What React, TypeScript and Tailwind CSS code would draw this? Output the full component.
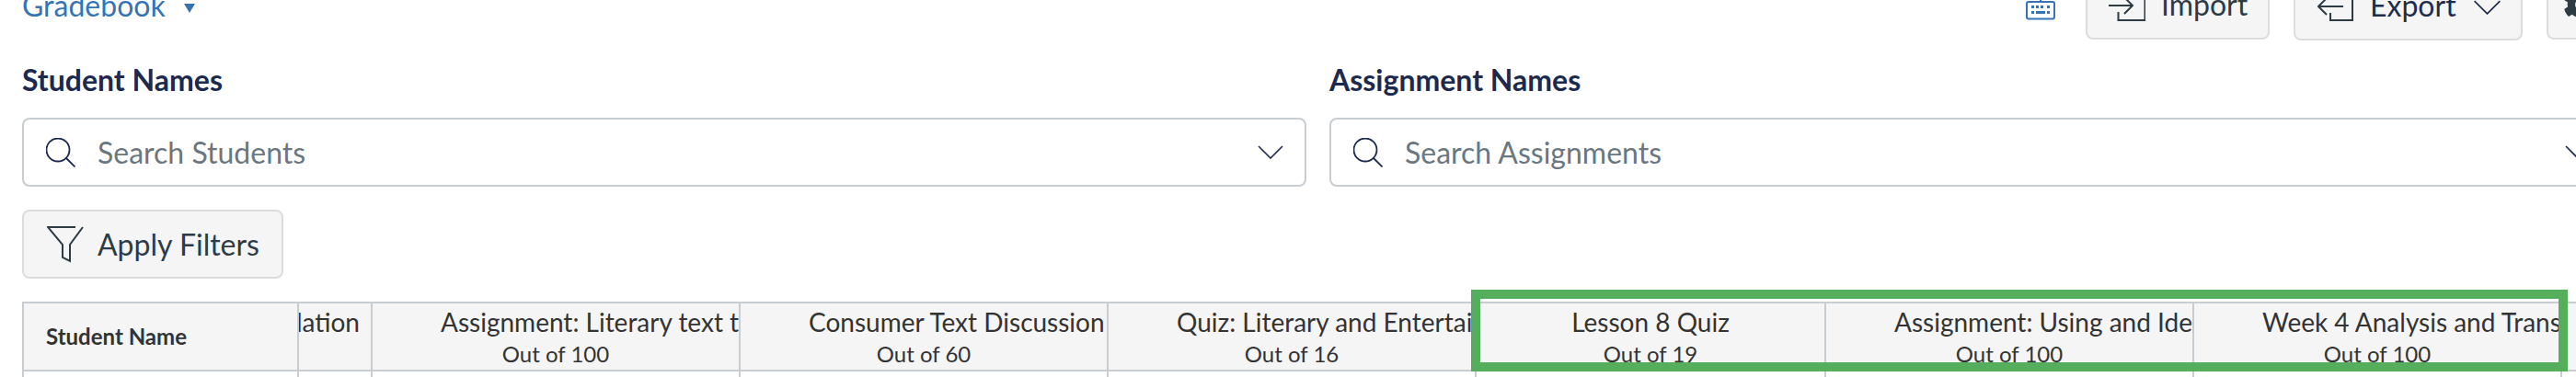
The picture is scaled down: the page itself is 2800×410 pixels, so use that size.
import { FaCog } from 'react-icons/fa';

const font = { fontFamily: 'Lato, sans-serif' };

function SearchIcon() {
  return (
    <svg viewBox="0 0 32 32" className="h-[32px] w-[32px] shrink-0 text-[#1b2a4e]" fill="none" stroke="currentColor" strokeWidth="1.8">
      <circle cx="13" cy="13" r="12.5" />
      <path d="M21.5 21.5 31.5 31.5" />
    </svg>
  );
}

function Chevron({ className }: { className: string }) {
  return (
    <svg viewBox="0 0 28 15" className={`shrink-0 ${className}`} fill="none" stroke="currentColor" strokeWidth="1.6">
      <path d="M1 1l13 13L27 1" />
    </svg>
  );
}

function SearchBox({ placeholder }: { placeholder: string }) {
  return (
    <div className="flex h-[75px] w-[1396px] items-center rounded-[8px] border-2 border-[#c7cdd1] pl-[24px]">
      <SearchIcon />
      <span className="ml-[24px] flex-1 text-[32px] text-[#6b7780]">{placeholder}</span>
      <Chevron className="mr-[23px] h-[15px] w-[28px] text-[#1b2a4e]" />
    </div>
  );
}

const columns = [
  { title: 'Assignment: Literary text t', sub: 'Out of 100', w: 'w-[400px]' },
  { title: 'Consumer Text Discussion', sub: 'Out of 60', w: 'w-[400px]' },
  { title: 'Quiz: Literary and Entertai', sub: 'Out of 16', w: 'w-[400px]' },
  { title: 'Lesson 8 Quiz', sub: 'Out of 19', w: 'w-[380px]' },
  { title: 'Assignment: Using and Ide', sub: 'Out of 100', w: 'w-[400px]' },
  { title: 'Week 4 Analysis and Trans', sub: 'Out of 100', w: 'w-[400px]' },
];

const rowCells = [299, 80, 400, 400, 400, 380, 400, 400, 20];

export default function App() {
  return (
    <div style={font} className="relative h-[410px] w-[2800px] overflow-hidden bg-white">
      <header className="-mt-[32px] flex h-[75px] items-center pl-[24px]">
        <div className="flex items-center text-[32px] text-[#3573b5]">
          Gradebook
          <svg viewBox="0 0 12 10" className="mt-[7px] ml-[20px] h-[10px] w-[12px]" fill="currentColor">
            <path d="M0 0h12L6 10z" />
          </svg>
        </div>
        <div className="ml-auto flex w-[598px] shrink-0 items-start">
          <svg viewBox="0 0 32 22" className="mt-[32px] mr-[33px] h-[22px] w-[32px] shrink-0 text-[#3573b5]" fill="currentColor">
            <rect x="1" y="2" width="30" height="18.5" rx="2" fill="none" stroke="currentColor" strokeWidth="2" />
            <path d="M15 0h2v2h-2zM6 6h3v3H6zM11 6h3v3h-3zM16 6h3v3h-3zM23 6h3v3h-3zM6 12h3v3H6zM11 12h10v3H11zM23 12h3v3h-3z" />
          </svg>
          <button className="flex h-[75px] w-[200px] shrink-0 items-center rounded-[8px] border-2 border-[#dcdcdc] bg-[#f5f5f5] pl-[23px] text-[32px] text-[#2d3b45]">
            <svg viewBox="0 0 40 36" className="mr-[17px] h-[36px] w-[40px]" fill="none" stroke="currentColor" strokeWidth="2">
              <path d="M0 19h26M17 10l9 9-9 9M10.5 26v9h29V1H14" />
            </svg>
            Import
          </button>
          <button className="ml-[26px] flex h-[76px] w-[249px] shrink-0 items-center rounded-[8px] border-2 border-[#dcdcdc] bg-[#f5f5f5] pl-[24px] text-[32px] text-[#1f2d4d]">
            <svg viewBox="0 0 40 36" className="mr-[17px] h-[36px] w-[40px] text-[#2d3b45]" fill="none" stroke="currentColor" strokeWidth="2">
              <path d="M28 19H1M10 10l-9 9 9 9M14 26v8h24V1H14v11" />
            </svg>
            Export
            <Chevron className="mt-[4px] ml-[18px] h-[16px] w-[31px]" />
          </button>
          <button className="ml-[26px] flex h-[75px] w-[60px] shrink-0 items-center rounded-l-[8px] border-2 border-r-0 border-[#dcdcdc] bg-[#f5f5f5] pl-[16px] text-[#2d3b45]">
            <FaCog className="h-[38px] w-[38px] shrink-0" />
          </button>
        </div>
      </header>

      <section className="mt-[24px] flex gap-[25px] pl-[24px]">
        <div className="shrink-0">
          <h2 className="mb-[21px] text-[32px] leading-[40px] font-bold text-[#1b2a4e]">Student Names</h2>
          <SearchBox placeholder="Search Students" />
        </div>
        <div className="shrink-0">
          <h2 className="mb-[21px] text-[32px] leading-[40px] font-bold text-[#1b2a4e]">Assignment Names</h2>
          <SearchBox placeholder="Search Assignments" />
        </div>
      </section>

      <button className="mt-[25px] ml-[24px] flex h-[75px] w-[284px] items-center rounded-[8px] border-2 border-[#dcdcdc] bg-[#f5f5f5] pl-[25px] text-[32px] text-[#2d3b45]">
        <svg viewBox="0 0 40 40" className="mr-[15px] h-[40px] w-[40px] shrink-0" fill="none" stroke="currentColor" strokeWidth="2">
          <path d="M31 1H1l16 19v14l8 4V20L39 1" />
        </svg>
        Apply Filters
      </button>

      <div className="mt-[25px] ml-[24px] flex h-[76px] border-y-2 border-[#c7cdd1] bg-[#f5f5f5] text-[#333]">
        <div className="flex w-[299px] shrink-0 items-center border-l-2 border-[#c7cdd1] pl-[24px] text-[24px] font-bold">Student Name</div>
        <div className="flex w-[80px] shrink-0 justify-end overflow-hidden border-l-2 border-[#c7cdd1] pr-[12px] text-[28px] leading-[40px]">lation</div>
        {columns.map((c) => (
          <div key={c.title} className={`${c.w} shrink-0 overflow-hidden border-l-2 border-[#c7cdd1] text-center whitespace-nowrap`}>
            <div className="mx-auto w-[250px] text-[28px] leading-[40px]">{c.title}</div>
            <div className="text-[24px] leading-[30px]">{c.sub}</div>
          </div>
        ))}
        <div className="w-[20px] shrink-0 border-l-2 border-[#c7cdd1]" />
      </div>

      <div className="ml-[24px] flex h-[7px]">
        {rowCells.map((w, i) => (
          <div key={i} style={{ width: w }} className="shrink-0 border-l-2 border-[#c7cdd1]" />
        ))}
      </div>

      <div className="absolute top-[315px] left-[1599px] h-[89px] w-[1192px] border-[10px] border-[#55ae5c]" />
    </div>
  );
}
